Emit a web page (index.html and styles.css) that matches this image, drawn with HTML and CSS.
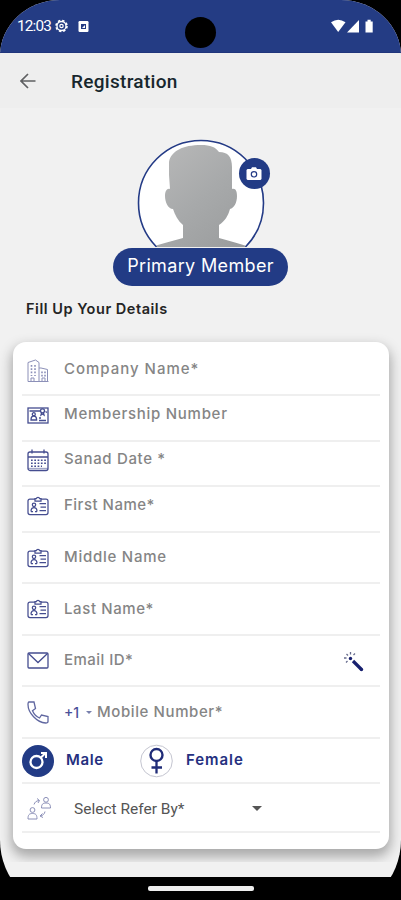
FILE: index.html
```html
<!DOCTYPE html>
<html lang="en">
<head>
<meta charset="utf-8">
<title>Registration</title>
<link rel="stylesheet" href="styles.css">
</head>
<body>
<svg class="defs" width="0" height="0">
  <symbol id="idcard" viewBox="0 0 22 20">
    <path d="M8 3H3a2 2 0 0 0-2 2v11.500a2 2 0 0 0 2 2h16a2 2 0 0 0 2-2V5a2 2 0 0 0-2-2h-5M8 2.500h1.300a1.800 1.800 0 0 1 3.400 0H14V5H8zM12.500 7.500h6.500M13.500 11h5.500M12.500 14.500h6.500M4 15.500c0-3 1.300-4 3-4s3 1 3 4M4 15.500h2M8 15.500h2"/>
    <circle cx="7" cy="8.800" r="1.700"/>
  </symbol>
</svg>
<div class="device">
  <div class="statusbar">
    <span class="time">12:03</span>
    <svg class="gear" width="13" height="14" viewBox="0 0 13 14"><circle class="teeth" cx="6.500" cy="7" r="5.500"/><circle cx="6.500" cy="7" r="4.500"/><circle class="dot" cx="6.500" cy="7" r="1.700"/></svg>
    <svg class="app" width="11" height="11" viewBox="0 0 10 11"><rect width="10" height="11" rx="1.200" fill="#fff"/><rect x="2.500" y="3" width="5" height="5" fill="#243c84"/><path d="M3.500 7 6.500 4v3z" fill="#fff"/></svg>
    <span class="camera-hole"></span>
    <svg class="signals" width="44" height="15" viewBox="0 0 44 15" fill="#fff"><path d="M0 3.200Q7.200-1.800 14.500 3.200L7.200 13z"/><path d="M28 1v12.500H16z"/><path d="M34.500 2.500h2V.800h3.200v1.700h2v11h-7.200z"/></svg>
  </div>
  <header class="appbar">
    <svg width="16" height="16" viewBox="0 0 16 16"><path d="M15.500 8H1.500M8 1 1 8l7 7"/></svg>
    <h1>Registration</h1>
  </header>
  <main>
    <section class="profile">
      <div class="avatar">
        <svg width="128" height="108" viewBox="0 0 128 108">
          <defs>
            <linearGradient id="grey" x2="1" y2="1"><stop offset="0" stop-color="#bcbcbc"/><stop offset=".5" stop-color="#a7a9aa"/><stop offset="1" stop-color="#969899"/></linearGradient>
            <clipPath id="round"><circle cx="64" cy="64" r="62"/></clipPath>
          </defs>
          <circle cx="64" cy="64" r="62.500" fill="#fff" stroke="#243b86" stroke-width="1.600"/>
          <path clip-path="url(#round)" fill="url(#grey)" d="M0 114c8-5 28-10 46-15V86c-5-4-8-10-10-16-5 0-8-7-8-13 0-5 2-8 5-7l-1-14V23C34 12 46 6 64 6c10 0 14 2 18 7 9 0 13 5 13 15v22c4-1 5 3 5 7 0 7-3 12-7 13-2 7-5 12-11 16v13c18 5 36 10 46 15z"/>
        </svg>
        <span class="photo"><svg width="16" height="14" viewBox="0 0 16 14"><path fill="#fff" d="M1.500 2H5l1-1.700h4L11 2h3.500l1 1v9l-1 1h-13l-1-1V3z"/><circle cx="8" cy="7.300" r="2.700" fill="#fff" stroke="#243b86" stroke-width="1.200"/></svg></span>
      </div>
      <div class="badge"><span>Primary Member</span></div>
    </section>
    <h2>Fill Up Your Details</h2>
    <section class="card-area">
      <form class="card">
        <div class="row company">
          <svg width="22" height="24" viewBox="0 0 22 24" class="icon faint"><path d="M1 22.500V3.500L8.500 1 12 3.500v19M12 9h2l6.500 1.500v12M1 22.500h20.500M4 22V19h3v3M15 22v-3h3v3"/><path class="dots" d="M4.500 6v11M8 6v11M15 12.500v5M18 12.500v5"/></svg>
          <label class="w1">Company Name*</label></div>
        <div class="row r46 raised">
          <svg width="22" height="17" viewBox="0 0 22 17" class="icon"><rect x="1" y="1" width="20" height="15"/><path d="M2.500 4h11M4 13c0-3 1-4 2.800-4s2.800 1 2.800 4zM12 13.500h7M12 11h2M18.500 4.500l1.500 1"/><circle cx="6.800" cy="7.200" r="1.500"/><circle cx="15.500" cy="3.800" r="2"/><path d="m14.500 6-.5 2 1.500-1 1.500 1-.5-2"/></svg>
          <label class="w2">Membership Number</label></div>
        <div class="row r45 raised">
          <svg width="22" height="23" viewBox="0 0 22 23" class="icon"><rect x="1" y="3" width="20" height="18.500" rx="2"/><path d="M1 8h20M5 .500v4M17 .500v4"/><path d="M1 19.500h20" opacity=".5"/><path class="dots" d="M4 11.200h15M4 14.200h15M4 17.200h11"/></svg>
          <label class="w3">Sanad Date *</label></div>
        <div class="row r46 raised"><svg width="22" height="20" class="icon id"><use href="#idcard"/></svg><label class="w4">First Name*</label></div>
        <div class="row r51"><svg width="22" height="20" class="icon id"><use href="#idcard"/></svg><label class="w5">Middle Name</label></div>
        <div class="row r52"><svg width="22" height="20" class="icon id"><use href="#idcard"/></svg><label class="w6">Last Name*</label></div>
        <div class="row r51">
          <svg width="22" height="17" viewBox="0 0 22 17" class="icon"><rect x="1" y="1" width="20" height="15" rx="1"/><path d="m1.500 1.500 9.500 9 9.500-9"/></svg>
          <label class="w7">Email ID*</label>
          <svg class="wand" width="22" height="22" viewBox="0 0 22 22"><path class="stick" d="m10 10 8.500 8.500"/><circle cx="7.500" cy="7.500" r="1.700"/><circle cx="18.500" cy="18.500" r="1.700"/><path class="sparks" d="M7.500 1v2.500M12 2.500 10.500 4M3.500 3 5 4.500M1 7h2.500M3 11.500 4.500 10"/></svg>
        </div>
        <div class="row r52">
          <svg width="22" height="23" viewBox="0 0 22 23" class="icon phone"><path d="M2 1h5l1.500 6.500-3 2.300c1.500 3.500 4 6 7 7.200l2-3 6.500 1.500v5c0 1.300-1 1.500-2.300 1.500C10 21.500 1 12 1 3.500 1 2 1.300 1 2 1z"/></svg>
          <span class="code">+1</span><i class="caret small"></i><label class="w8">Mobile Number*</label></div>
        <div class="row gender">
          <svg class="male" width="32" height="32" viewBox="0 0 32 32"><circle cx="16" cy="16" r="16" fill="#223b85"/><circle cx="14.500" cy="17" r="6" fill="none" stroke="#fff" stroke-width="2.300"/><path d="m19 12.500 4-4M19 8h5v5" fill="none" stroke="#fff" stroke-width="2"/></svg>
          <span class="g-male">Male</span>
          <svg class="female" width="33" height="34" viewBox="0 0 33 34"><circle cx="16.500" cy="17" r="15.800" fill="#fff" stroke="#c4c5d0"/><path d="M16.500 17v12.500M11.500 23.500h10.500" fill="none" stroke="#202c78" stroke-width="2.300"/><circle cx="16.500" cy="11" r="6" fill="none" stroke="#202c78" stroke-width="2.400"/></svg>
          <span class="g-female">Female</span>
        </div>
        <div class="row refer">
          <svg width="25" height="25" viewBox="0 0 25 25" class="icon faint"><circle cx="5.500" cy="14" r="2.400"/><path d="M1 23c0-4 1-5.500 4.500-5.500S10 19 10 23zM14.500 12c0-3.500 1-5 4.500-5s4.500 1.500 4.500 5z"/><circle cx="19" cy="3.800" r="2.400"/><path d="M7 8.500c1-2.500 2-3.500 5-4M10 2.500l2.500 2L11 7M18 15.500c-.5 2.500-2 4-4.500 4.500M15.500 17.500 13 20l3 1.500"/></svg>
          <span class="select">Select Refer By*</span><i class="caret"></i>
        </div>
      </form>
    </section>
  </main>
</div>
<footer class="navbar"><span></span></footer>
</body>
</html>
```

FILE: styles.css
```css
* { box-sizing: border-box; }
body { margin: 0; width: 401px; height: 900px; overflow: hidden; background: #000; font-family: Inter, sans-serif; }
.defs { position: absolute; }
.device { height: 913px; overflow: hidden; background: #f1f1f1; border-radius: 60px 60px 73px 73px / 56px 56px 73px 73px; }
.statusbar { position: relative; display: flex; align-items: center; height: 53px; padding: 0 26px 0 17px; background: #243c84; border-bottom: 1px solid #20357b; color: #fff; }
.time { width: 34px; font: 15.3px Roboto, sans-serif; letter-spacing: -0.8px; }
.gear { margin-left: 4px; fill: none; stroke: #fff; stroke-width: 1.3; }
.gear .teeth { stroke-width: 1.6; stroke-dasharray: 2.4 1.92; }
.gear .dot { stroke-width: 1.2; }
.app { margin-left: 10px; }
.signals { margin-left: auto; }
.camera-hole { position: absolute; left: 185px; top: 17px; width: 31px; height: 31px; border-radius: 50%; background: #000; }
.appbar { display: flex; align-items: center; height: 55px; padding: 0 20px; background: #eee; }
.appbar svg { fill: none; stroke: #5f6062; stroke-width: 1.7; }
h1 { margin: 2px 0 0 35px; color: #17272d; font: 500 19px Roboto, sans-serif; letter-spacing: 0.3px; }
.profile { display: flex; flex-direction: column; align-items: center; padding-top: 32px; }
.avatar { position: relative; width: 128px; height: 108px; margin-top: -1px; }
.avatar svg { display: block; }
.photo { position: absolute; left: 102px; top: 19px; width: 31px; height: 31px; display: grid; place-items: center; border-radius: 50%; background: #223b85; }
.badge { display: grid; place-items: center; width: 175px; height: 38px; margin-top: 1px; border-radius: 19px; background: #223b85; color: #fff; font-size: 18px; padding-bottom: 3px; letter-spacing: 0.35px; white-space: nowrap; }
h2 { position: relative; top: -1px; margin: 14px 0 0 26px; height: 20px; color: #242424; font-size: 14.5px; font-weight: 600; line-height: 20px; letter-spacing: 0.53px; }
.card-area { height: 542px; padding: 22px 12px 0 13px; overflow: hidden; }
.card { height: 507px; padding: 6px 9px 0; border-radius: 13px; background: #fff; box-shadow: 0 6px 12px 2px #aaa; }
.row { display: flex; align-items: center; border-bottom: 2px solid #efefef; padding-left: 5px; color: #858585; font-size: 15px; font-weight: 500; white-space: nowrap; }
.row label { margin-left: 15px; position: relative; top: -1px; }
.w1 { letter-spacing: 0.98px; }
.w2 { letter-spacing: 0.72px; }
.w3 { letter-spacing: 0.65px; }
.w4 { letter-spacing: 0.5px; }
.w5 { letter-spacing: 0.75px; }
.w6 { letter-spacing: 0.6px; }
.w7 { letter-spacing: 0.45px; }
.w8 { letter-spacing: 0.6px; }
.company { height: 48px; }
.row.company label { top: -3px; }
.raised { padding-bottom: 6px; }
.row.raised label { top: -2px; }
.r45 { height: 45px; }
.r46 { height: 46px; }
.r51 { height: 51px; }
.r52 { height: 52px; }
.icon { flex: none; fill: none; stroke: #454d90; stroke-width: 1.3; }
.icon.id { stroke-width: 1.25; }
.faint { stroke: #8c90b8; stroke-width: 1; }
.phone { stroke: #6067a0; }
.dots { stroke-width: 1.6; stroke-dasharray: 1.7 1.6; }
.wand { margin: 2px 15px 0 auto; fill: #18206f; }
.wand path { stroke: #18206f; stroke-width: 3.2; }
.wand .sparks { stroke: #666b8c; stroke-width: 1.3; }
.code { margin-left: 15px; width: 18px; color: #4a5199; font-size: 14px; }
.caret { width: 0; border: 5px solid transparent; border-top-color: #555; border-bottom: 0; }
.caret.small { margin-left: 4px; border-width: 3px 3px 0; border-top-color: #7880ad; }
.row .w8 { margin-left: 5px; }
.gender { height: 45px; padding-left: 0; color: #25307f; font-weight: 600; }
.g-male { width: 74px; margin-left: 12px; padding-bottom: 3px; letter-spacing: 0.6px; }
.g-female { margin-left: 13px; padding-bottom: 3px; letter-spacing: 0.95px; }
.refer { height: 49px; padding-top: 1px; }
.select { width: 178px; margin-left: 22px; padding-top: 1px; color: #555; font: 15.5px Roboto, sans-serif; }
.navbar { position: absolute; top: 877px; left: 0; width: 401px; height: 23px; background: #000; }
.navbar span { display: block; width: 106px; height: 5px; margin: 9px 0 0 148px; border-radius: 2px; background: #eee; }
```
